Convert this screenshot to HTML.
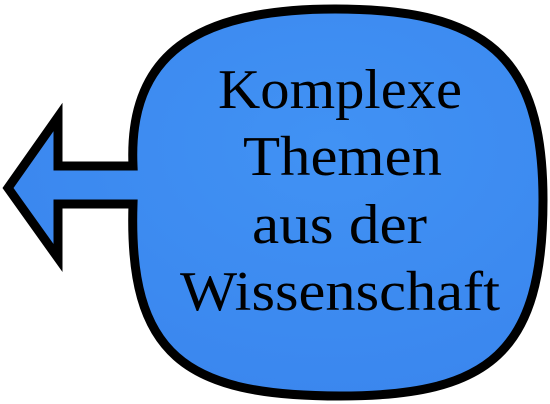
<!DOCTYPE html>
<html><head><meta charset="utf-8"><style>
html,body{margin:0;padding:0;background:#fff;width:550px;height:404px;overflow:hidden}
</style></head><body>
<svg width="550" height="404" viewBox="0 0 550 404" xmlns="http://www.w3.org/2000/svg">
<defs>
<radialGradient id="g" cx="60%" cy="35%" r="70%">
<stop offset="0" stop-color="#4192f4"/>
<stop offset="1" stop-color="#3a86ee"/>
</radialGradient>
</defs>
<path d="M 133 166 C 128 55, 195 9, 335 9 C 485 9, 543 55, 543 200 C 543 352, 490 396, 340 396 C 185 396, 128 355, 133 204 L 58 204 L 58 258 L 8 188 L 58 117 L 58 166 Z"
 fill="url(#g)" stroke="#000" stroke-width="9" stroke-linejoin="miter"/>
<g font-family="Liberation Serif, serif" font-size="56" fill="#000">
<text x="218" y="108" textLength="244" lengthAdjust="spacingAndGlyphs">Komplexe</text>
<text x="243" y="175" textLength="199" lengthAdjust="spacingAndGlyphs">Themen</text>
<text x="252" y="243" textLength="175" lengthAdjust="spacingAndGlyphs">aus der</text>
<text x="180" y="310" textLength="320" lengthAdjust="spacingAndGlyphs">Wissenschaft</text>
</g>
</svg>
</body></html>
